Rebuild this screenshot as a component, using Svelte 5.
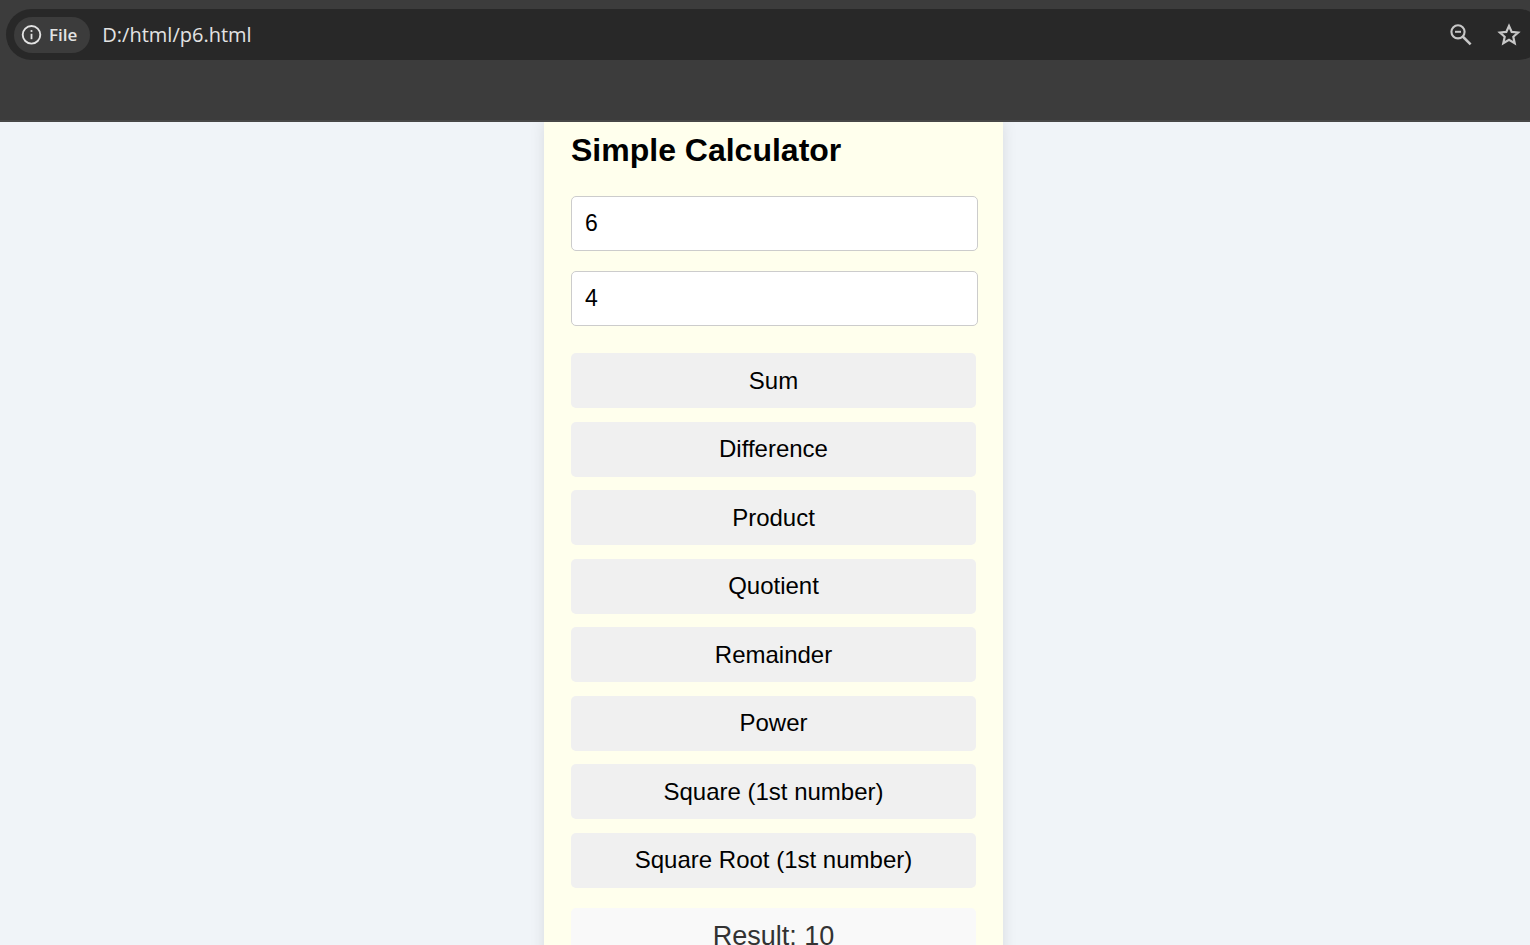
<script>
  let first = $state('6');
  let second = $state('4');
  let result = $state(10);

  const operations = [
    { label: 'Sum', run: (a, b) => a + b },
    { label: 'Difference', run: (a, b) => a - b },
    { label: 'Product', run: (a, b) => a * b },
    { label: 'Quotient', run: (a, b) => a / b },
    { label: 'Remainder', run: (a, b) => a % b },
    { label: 'Power', run: (a, b) => a ** b },
    { label: 'Square (1st number)', run: (a) => a * a },
    { label: 'Square Root (1st number)', run: (a) => Math.sqrt(a) }
  ];
</script>

<div class="browser">
  <header class="toolbar">
    <div class="omnibox">
      <button class="chip" type="button">
        <svg width="22" height="22" viewBox="0 0 22 22" fill="none" aria-hidden="true">
          <circle cx="11.5" cy="10.8" r="8.8" stroke="#e3e3e3" stroke-width="1.9" />
          <path d="M11.5 9.8v5.4" stroke="#e3e3e3" stroke-width="1.8" />
          <circle cx="11.5" cy="7" r="1.1" fill="#e3e3e3" />
        </svg>
        <span>File</span>
      </button>
      <input class="address" type="text" value="D:/html/p6.html" aria-label="Address" spellcheck="false" />
      <button class="action" type="button" aria-label="Zoom">
        <svg width="24" height="24" viewBox="0 0 24 24" fill="none" stroke="#c7c7c7" aria-hidden="true">
          <circle cx="9" cy="8.8" r="6.6" stroke-width="2.1" />
          <path d="M13.7 13.5 21.6 21.4" stroke-width="2.5" />
          <path d="M6 8.8h6" stroke-width="2" />
        </svg>
      </button>
      <button class="action" type="button" aria-label="Bookmark">
        <svg width="24" height="24" viewBox="0 0 24 24" fill="none" stroke="#c7c7c7" aria-hidden="true">
          <path d="M12 3 14.7 8.9 21.1 9.5 16.3 13.8 17.7 20.2 12 16.8 6.3 20.2 7.7 13.8 2.9 9.5 9.3 8.9Z" stroke-width="2.2" />
        </svg>
      </button>
    </div>
  </header>

  <main>
    <section class="card">
      <h1>Simple Calculator</h1>
      <div class="fields">
        <input type="text" inputmode="decimal" aria-label="First number" bind:value={first} />
        <input type="text" inputmode="decimal" aria-label="Second number" bind:value={second} />
      </div>
      <div class="operations">
        {#each operations as op}
          <button type="button" onclick={() => (result = op.run(Number(first), Number(second)))}>{op.label}</button>
        {/each}
      </div>
      <output>Result: {result}</output>
    </section>
  </main>
</div>

<style>
  :global(body) {
    margin: 0;
  }

  .browser {
    display: flex;
    flex-direction: column;
    height: 100vh;
    overflow: hidden;
    font-family: 'Liberation Sans', Arial, sans-serif;
  }

  .browser * {
    box-sizing: border-box;
  }

  .toolbar {
    flex: none;
    padding: 9px 0 60px 6px;
    background: #3c3c3c;
    border-bottom: 2px solid #474747;
  }

  .omnibox {
    display: flex;
    align-items: center;
    height: 51px;
    margin-right: -14px;
    padding: 0 23px 0 8px;
    border-radius: 26px;
    background: #282828;
    font-family: 'Open Sans', 'Noto Sans', sans-serif;
  }

  .chip {
    display: flex;
    align-items: center;
    gap: 7px;
    height: 36px;
    padding: 0 13px 0 6px;
    border: 0;
    border-radius: 18px;
    background: #3c3c3c;
    color: #e3e3e3;
    font: 600 17px/24px 'Open Sans', 'Noto Sans', sans-serif;
  }

  .address {
    flex: 1;
    min-width: 0;
    padding: 0 12px;
    border: 0;
    outline: 0;
    background: none;
    color: #e3e3e3;
    font: 20px/28px 'Open Sans', 'Noto Sans', sans-serif;
  }

  .action {
    display: flex;
    padding: 0;
    margin-left: 24px;
    border: 0;
    background: none;
  }

  main {
    display: flex;
    justify-content: center;
    flex: 1;
    min-height: 0;
    padding-left: 17px;
    overflow: hidden;
    background: #f0f4f8;
  }

  .card {
    flex: none;
    align-self: flex-start;
    width: 459px;
    max-width: 100%;
    padding: 8px 27px 27px;
    background: #ffffed;
    box-shadow: 0 0 14px rgba(0, 0, 0, 0.1);
  }

  h1 {
    margin: 0 0 26px;
    font-size: 32px;
    line-height: 40px;
    font-weight: 700;
  }

  .fields {
    display: flex;
    flex-direction: column;
    gap: 20px;
    margin: 0 -2px 27px 0;
  }

  .fields input {
    width: 100%;
    height: 55px;
    padding: 0 13px;
    border: 1px solid #ccc;
    border-radius: 5px;
    background: #fff;
    color: #000;
    font: 23px/28px 'Liberation Sans', Arial, sans-serif;
  }

  .operations {
    display: flex;
    flex-direction: column;
    justify-content: space-between;
    min-height: 535px;
  }

  .operations button {
    height: 55px;
    padding: 0;
    border: 0;
    border-radius: 5px;
    background: #f0f0f0;
    color: #000;
    font: 24px/28px 'Liberation Sans', Arial, sans-serif;
    cursor: pointer;
  }

  output {
    display: block;
    margin-top: 20px;
    padding: 12px;
    border-radius: 5px;
    background: #f9f9f9;
    color: #333;
    font-size: 27px;
    line-height: 32px;
    text-align: center;
  }
</style>
